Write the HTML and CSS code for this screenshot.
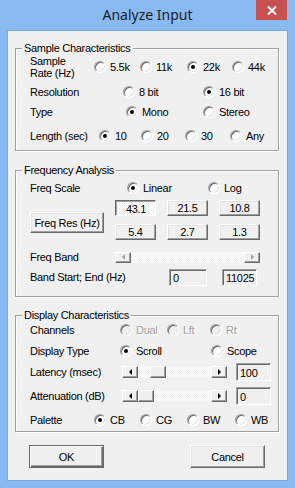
FILE: index.html
```html
<!DOCTYPE html>
<html lang="en">

<head>
    <meta charset="UTF-8" />
    <title>Analyze Input</title>
    <link rel="stylesheet" href="styles.css">
</head>

<body>
    <div class="window">
        <!-- Barra de título -->
        <div class="titlebar">
            <span></span>
            <span class="title">Analyze Input</span>
            <span class="close">
                <svg width="10" height="9" viewBox="0 0 10 9"><path d="M1 0.5 L9 8.5 M9 0.5 L1 8.5" stroke="#fff" stroke-width="2"/></svg>
            </span>
        </div>

        <div class="client">
            <!-- Sample -->
            <fieldset class="group">
                <legend>Sample Characteristics</legend>
                <div class="body">
                    <div class="row row-rate">
                        <span class="two-line">Sample<br>Rate (Hz)</span>
                        <span class="opt"><i class="radio"></i>5.5k</span>
                        <span class="opt"><i class="radio"></i>11k</span>
                        <span class="opt"><i class="radio on"></i>22k</span>
                        <span class="opt"><i class="radio"></i>44k</span>
                    </div>
                    <div class="row row-res">
                        <span>Resolution</span>
                        <span class="opt"><i class="radio"></i>8 bit</span>
                        <span class="opt"><i class="radio on"></i>16 bit</span>
                    </div>
                    <div class="row row-type">
                        <span>Type</span>
                        <span class="opt"><i class="radio on"></i>Mono</span>
                        <span class="opt"><i class="radio"></i>Stereo</span>
                    </div>
                    <div class="row row-len">
                        <span>Length (sec)</span>
                        <span class="opt"><i class="radio on"></i>10</span>
                        <span class="opt"><i class="radio"></i>20</span>
                        <span class="opt"><i class="radio"></i>30</span>
                        <span class="opt"><i class="radio"></i>Any</span>
                    </div>
                </div>
            </fieldset>

            <!-- Frequency -->
            <fieldset class="group">
                <legend>Frequency Analysis</legend>
                <div class="body body-freq">
                    <div class="row row-scale">
                        <span>Freq Scale</span>
                        <span class="opt"><i class="radio on"></i>Linear</span>
                        <span class="opt"><i class="radio"></i>Log</span>
                    </div>
                    <div class="res-block">
                        <button class="btn btn-res">Freq Res (Hz)</button>
                        <div class="res-grid">
                            <button class="btn down">43.1</button>
                            <button class="btn">21.5</button>
                            <button class="btn">10.8</button>
                            <button class="btn">5.4</button>
                            <button class="btn">2.7</button>
                            <button class="btn">1.3</button>
                        </div>
                    </div>
                    <div class="row row-band">
                        <span>Freq Band</span>
                        <div class="scroll scroll-band">
                            <span class="sb-btn dis"><i class="arr-l"></i></span>
                            <span class="sb-track"></span>
                            <span class="sb-btn dis"><i class="arr-r"></i></span>
                        </div>
                    </div>
                    <div class="row row-start">
                        <span>Band Start; End (Hz)</span>
                        <span class="field field-start">0</span>
                        <span class="field field-end">11025</span>
                    </div>
                </div>
            </fieldset>

            <!-- Display -->
            <fieldset class="group">
                <legend>Display Characteristics</legend>
                <div class="body body-disp">
                    <div class="row row-chan">
                        <span>Channels</span>
                        <span class="opt off"><i class="radio"></i>Dual</span>
                        <span class="opt off"><i class="radio"></i>Lft</span>
                        <span class="opt off"><i class="radio"></i>Rt</span>
                    </div>
                    <div class="row row-dtype">
                        <span>Display Type</span>
                        <span class="opt"><i class="radio on"></i>Scroll</span>
                        <span class="opt"><i class="radio"></i>Scope</span>
                    </div>
                    <div class="row row-slider row-lat">
                        <span>Latency (msec)</span>
                        <div class="scroll">
                            <span class="sb-btn"><i class="arr-l"></i></span>
                            <span class="sb-track track-lat"><span class="sb-btn thumb"></span></span>
                            <span class="sb-btn"><i class="arr-r"></i></span>
                        </div>
                        <span class="field">100</span>
                    </div>
                    <div class="row row-slider row-att">
                        <span>Attenuation (dB)</span>
                        <div class="scroll">
                            <span class="sb-btn"><i class="arr-l"></i></span>
                            <span class="sb-track"><span class="sb-btn thumb"></span></span>
                            <span class="sb-btn"><i class="arr-r"></i></span>
                        </div>
                        <span class="field">0</span>
                    </div>
                    <div class="row row-pal">
                        <span>Palette</span>
                        <span class="opt"><i class="radio on"></i>CB</span>
                        <span class="opt"><i class="radio"></i>CG</span>
                        <span class="opt"><i class="radio"></i>BW</span>
                        <span class="opt"><i class="radio"></i>WB</span>
                    </div>
                </div>
            </fieldset>

            <div class="actions">
                <button class="btn btn-main btn-default">OK</button>
                <button class="btn btn-main">Cancel</button>
            </div>
        </div>
    </div>
</body>

</html>
```

FILE: styles.css
```css
:root {
    --face: #f0f0f0;
    --light: #e3e3e3;
    --shadow: #a0a0a0;
    --dark: #696969;
    --frame: #88b9f1;
    --checker: repeating-conic-gradient(#fff 0 25%, #f0f0f0 0 50%) 0 0 / 2px 2px;
}

* {
    box-sizing: border-box;
}

body {
    margin: 0;
    font-family: "Liberation Sans", Arial, sans-serif;
    font-size: 11px;
    letter-spacing: -0.3px;
    color: #000;
}

.window {
    width: 295px;
    height: 488px;
    background: var(--frame);
    padding: 0 8px 8px;
    display: flex;
    flex-direction: column;
}

/* barra de título */
.titlebar {
    height: 31px;
    flex: none;
    display: grid;
    grid-template-columns: 1fr auto 1fr;
    align-items: start;
}

.title {
    font-family: "Noto Sans", sans-serif;
    font-size: 14px;
    letter-spacing: 0;
    color: #1e1e1e;
    line-height: 20px;
    padding-top: 5px;
}

.close {
    justify-self: end;
    width: 31px;
    height: 20px;
    background: #c75050;
    display: flex;
    align-items: center;
    justify-content: center;
}

.client {
    flex: 1;
    background: var(--face);
    padding: 11px 8px 0 7px;
    box-shadow: 0 0 0 1px #7aa7de;
}

/* grupos */
.group {
    margin: 0;
    padding: 0;
    min-width: 0;
    border: 1px solid var(--shadow);
    box-shadow: inset 1px 1px #fff, 1px 1px #fff;
}

.group + .group {
    margin-top: 13px;
}

.group:last-of-type {
    margin-top: 12px;
}

.group legend {
    margin-left: 6px;
    padding: 0 2px;
    line-height: 13px;
    background: var(--face);
}

.body {
    padding: 0 0 4px 14px;
    display: flex;
    flex-direction: column;
}

.row {
    display: grid;
    align-items: center;
    height: 20px;
    white-space: nowrap;
}

.row-rate {
    height: 24px;
    grid-template-columns: 64px 46px 47px 45px auto;
}

.two-line {
    line-height: 12px;
}

.row-res {
    margin-top: 3px;
    grid-template-columns: 93px 80px auto;
}

.row-type {
    grid-template-columns: 96px 77px auto;
}

.row-len {
    margin-top: 4px;
    grid-template-columns: 69px 42px 44px 45px auto;
}

/* radios */
.opt {
    display: flex;
    align-items: center;
}

.radio {
    width: 12px;
    height: 12px;
    flex: none;
    margin-right: 4px;
    border-radius: 50%;
    background: #fff;
    border: 1px solid;
    border-color: var(--shadow) #fff #fff var(--shadow);
    box-shadow: inset 1px 1px var(--dark), inset -1px -1px var(--light);
    display: flex;
    align-items: center;
    justify-content: center;
}

.radio.on::after {
    content: "";
    width: 4px;
    height: 4px;
    border-radius: 50%;
    background: #000;
}

.opt.off {
    color: var(--shadow);
    text-shadow: 1px 1px #fff;
}

.opt.off .radio {
    background: var(--face);
}

/* frecuencia */
.body-freq {
    padding-bottom: 9px;
}

.row-scale {
    margin-top: 1px;
    grid-template-columns: 97px 81px auto;
}

.res-block {
    margin-top: 2px;
    display: flex;
    align-items: flex-start;
}

.btn {
    font: inherit;
    letter-spacing: inherit;
    color: #000;
    padding: 0;
    background: var(--face);
    border: 1px solid;
    border-color: #fff var(--dark) var(--dark) #fff;
    box-shadow: inset -1px -1px var(--shadow), inset 1px 1px var(--light);
    display: flex;
    align-items: center;
    justify-content: center;
}

.btn-res {
    width: 74px;
    height: 21px;
    margin-top: 12px;
}

.res-grid {
    margin-left: 11px;
    display: grid;
    grid-template-columns: repeat(3, 41px);
    grid-auto-rows: 16px;
    column-gap: 11px;
    row-gap: 8px;
}

.btn.down {
    border-color: var(--dark) #fff #fff var(--dark);
    box-shadow: inset 1px 1px var(--shadow);
    background: var(--checker);
    padding: 1px 0 0 1px;
}

.row-band {
    margin-top: 7px;
    grid-template-columns: 85px 145px;
}

.row-start {
    grid-template-columns: 139px 38px auto;
}

.field {
    height: 17px;
    border: 1px solid;
    border-color: var(--shadow) #fff #fff var(--shadow);
    box-shadow: inset 1px 1px var(--dark);
    background: var(--face);
    padding: 1px 0 0 3px;
    display: flex;
    align-items: center;
}

.field-end {
    width: 35px;
    margin-left: 15px;
}

/* barras de desplazamiento */
.scroll {
    display: flex;
    height: 12px;
}

.scroll-band {
    height: 11px;
}

.sb-track {
    flex: 1;
    background: var(--checker);
    display: flex;
}

.track-lat {
    padding-left: 12px;
}

.sb-btn {
    width: 16px;
    height: 100%;
    flex: none;
    background: var(--face);
    border: 1px solid;
    border-color: #fff var(--dark) var(--dark) #fff;
    box-shadow: inset -1px -1px var(--shadow);
    display: flex;
    align-items: center;
    justify-content: center;
}

.arr-l,
.arr-r {
    width: 0;
    height: 0;
    border-top: 3px solid transparent;
    border-bottom: 3px solid transparent;
}

.arr-l {
    border-right: 3px solid #000;
}

.arr-r {
    border-left: 3px solid #000;
}

.sb-btn.dis .arr-l {
    border-right-color: var(--shadow);
}

.sb-btn.dis .arr-r {
    border-left-color: var(--shadow);
}

/* display */
.body-disp {
    padding-bottom: 1px;
}

.row-chan {
    height: 16px;
    grid-template-columns: 90px 47px 43px auto;
}

.row-dtype {
    margin-top: 3px;
    grid-template-columns: 90px 91px auto;
}

.row-slider {
    grid-template-columns: 83px 105px 35px;
    column-gap: 9px;
}

.row-slider .field {
    height: 18px;
}

.row-lat {
    margin-top: 1px;
}

.row-att {
    margin-top: 4px;
}

.row-pal {
    margin-top: 4px;
    grid-template-columns: 64px 46px 47px 48px auto;
}

/* botones finales */
.actions {
    margin-top: 13px;
    padding: 0 14px 0 14px;
    display: flex;
    justify-content: space-between;
}

.btn-main {
    width: 75px;
    height: 23px;
}

.btn-default {
    border-color: var(--dark);
    box-shadow: inset 1px 1px #fff, inset -1px -1px var(--dark), inset -2px -2px var(--shadow);
}
```
